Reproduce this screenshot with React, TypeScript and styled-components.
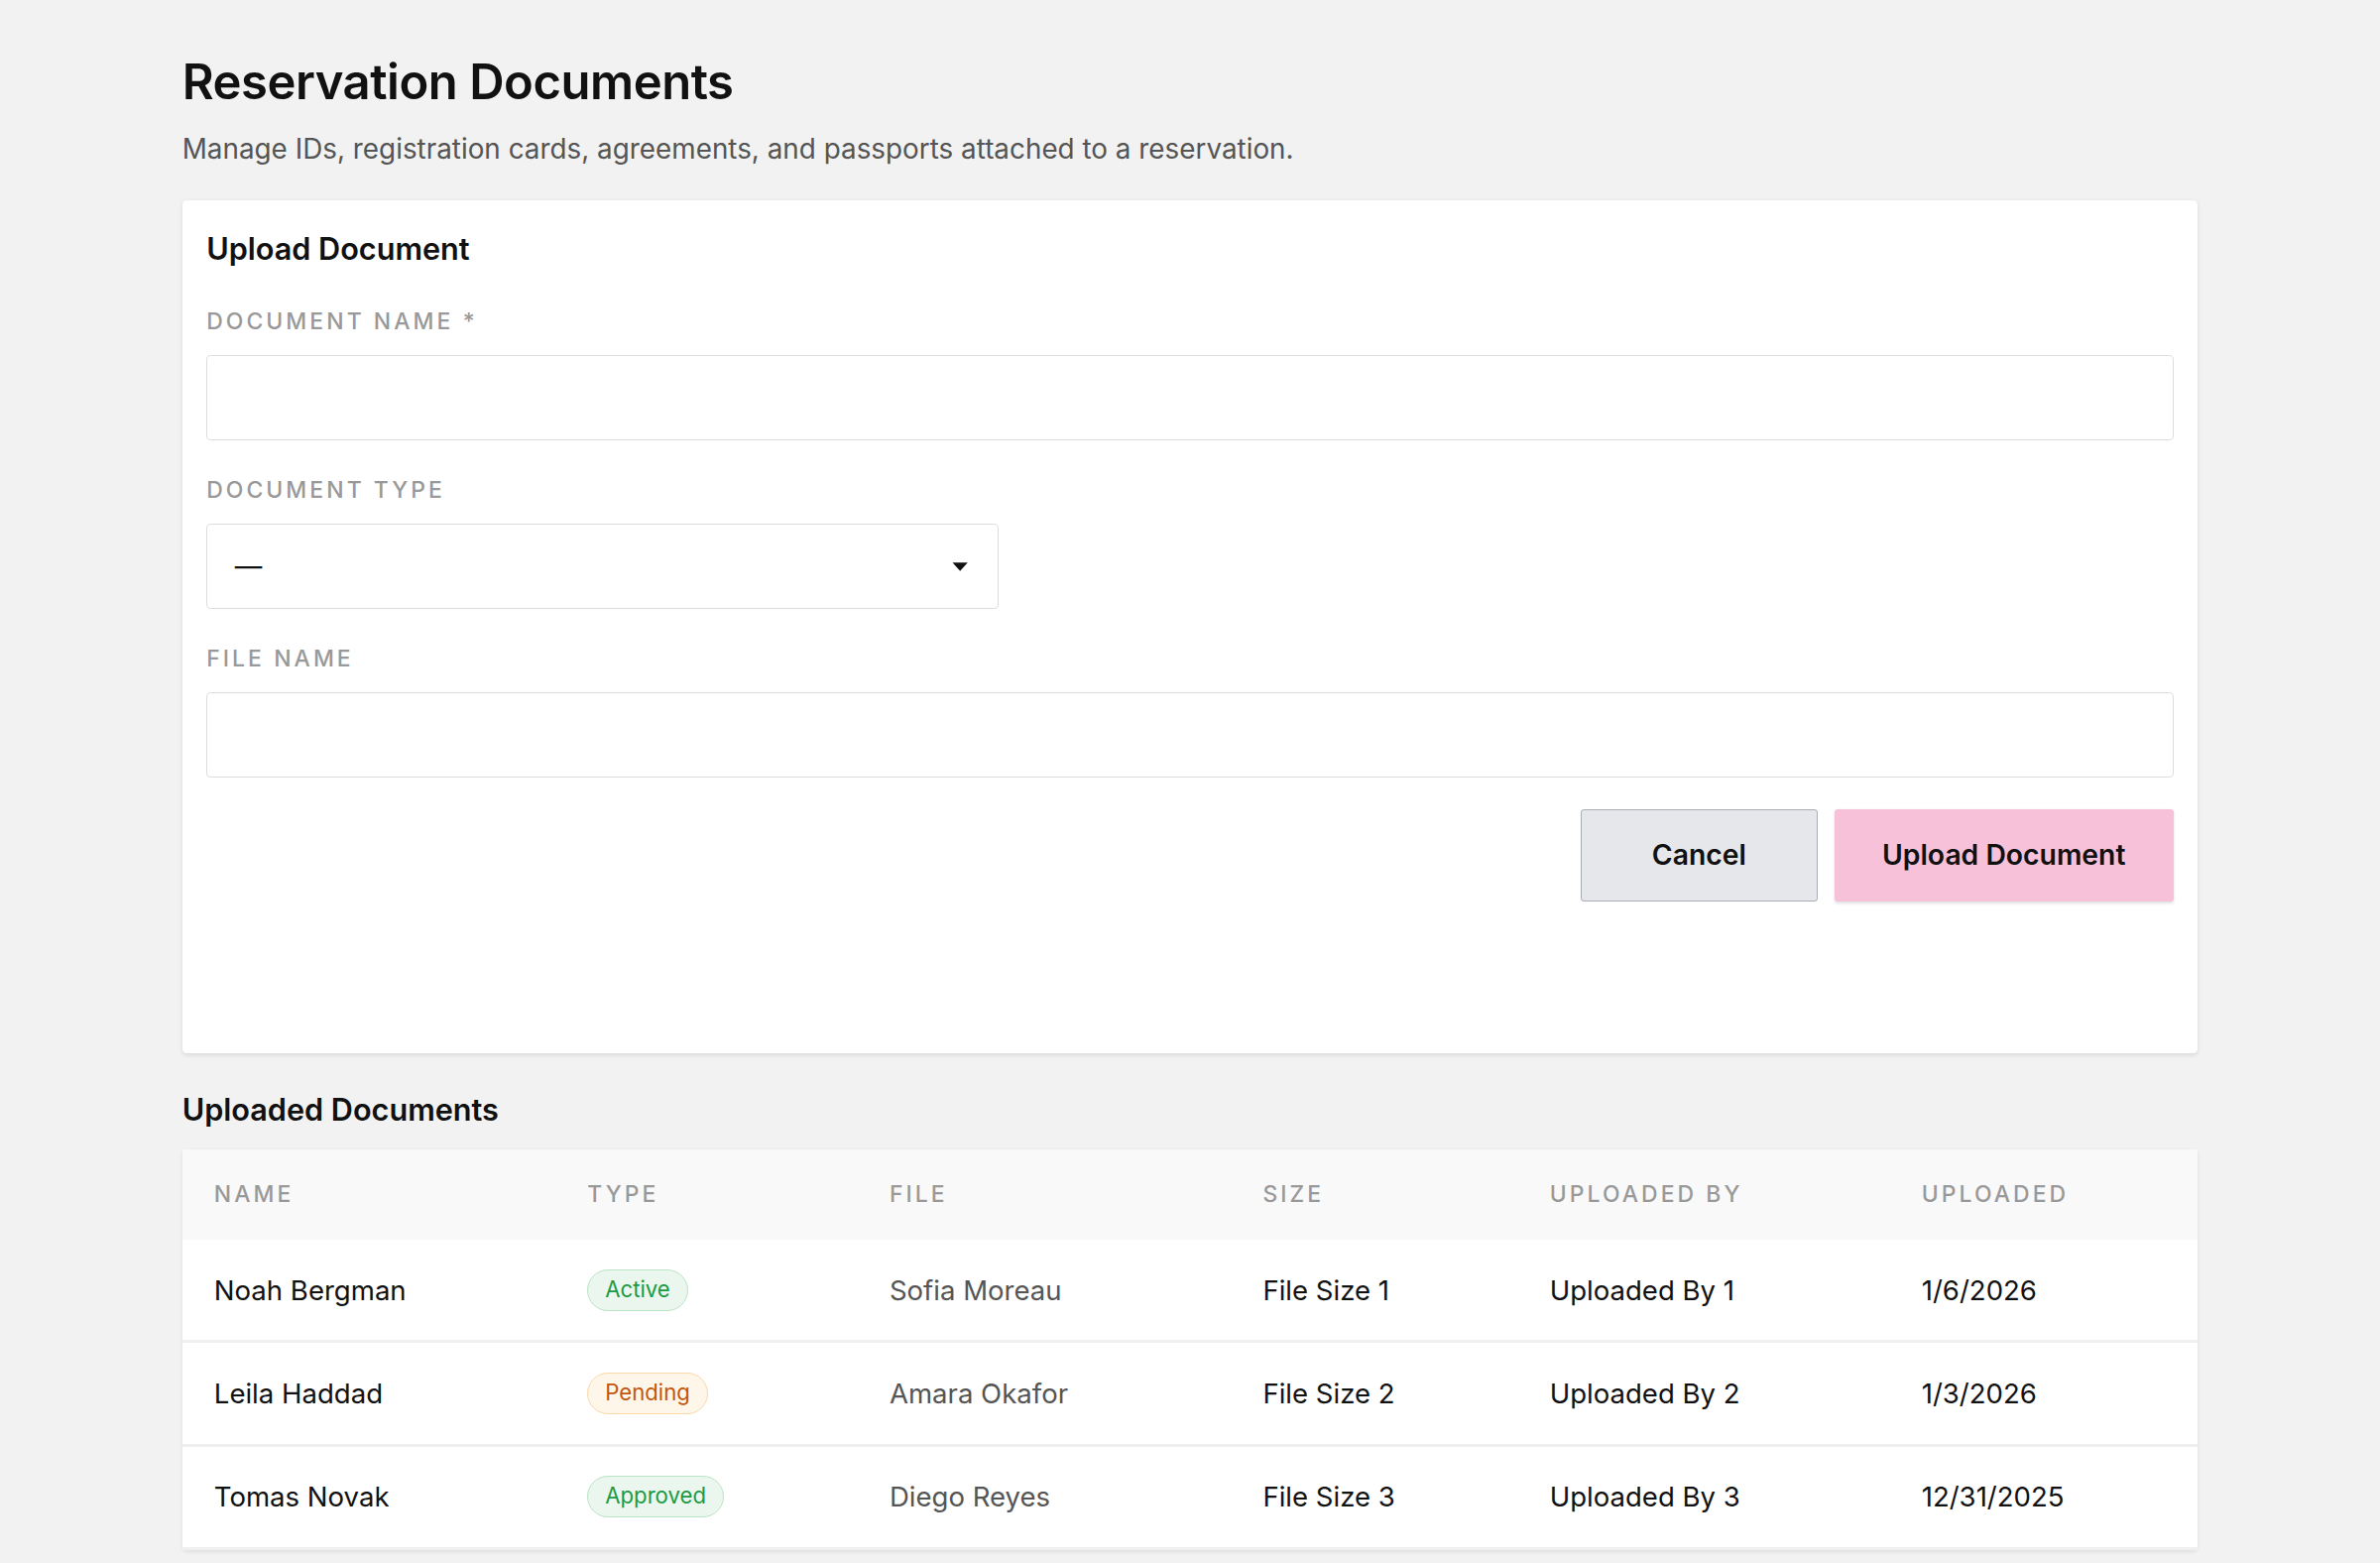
import React from 'react';
import styled, { createGlobalStyle } from 'styled-components';

const GlobalStyle = createGlobalStyle`
  html, body {
    margin: 0;
    background: #f2f2f2;
  }
  body {
    zoom: 1.5306;
    font-family: Inter, 'Noto Sans', sans-serif;
    color: #111;
  }
  * { box-sizing: border-box; }
`;

type Status = 'Active' | 'Pending' | 'Approved';

const rows: { name: string; type: Status; file: string; size: string; by: string; date: string }[] = [
  { name: 'Noah Bergman', type: 'Active', file: 'Sofia Moreau', size: 'File Size 1', by: 'Uploaded By 1', date: '1/6/2026' },
  { name: 'Leila Haddad', type: 'Pending', file: 'Amara Okafor', size: 'File Size 2', by: 'Uploaded By 2', date: '1/3/2026' },
  { name: 'Tomas Novak', type: 'Approved', file: 'Diego Reyes', size: 'File Size 3', by: 'Uploaded By 3', date: '12/31/2025' },
];

const App = () => {
  return (
    <React.Fragment>
      <GlobalStyle />
      <Page>
        <Title>Reservation Documents</Title>
        <Subtitle>Manage IDs, registration cards, agreements, and passports attached to a reservation.</Subtitle>

        <Card>
          <CardTitle>Upload Document</CardTitle>
          <Field>
            <Label>Document Name *</Label>
            <Input />
          </Field>
          <Field>
            <Label>Document Type</Label>
            <Select>
              <span>—</span>
              <svg width="12" height="8" viewBox="0 0 12 8">
                <path d="M1 1.5h10L6 7z" fill="#111" />
              </svg>
            </Select>
          </Field>
          <Field>
            <Label>File Name</Label>
            <Input />
          </Field>
          <Actions>
            <Button>Cancel</Button>
            <Button $primary>Upload Document</Button>
          </Actions>
        </Card>

        <SectionTitle>Uploaded Documents</SectionTitle>
        <Table>
          <HeadRow>
            <span>Name</span>
            <span>Type</span>
            <span>File</span>
            <span>Size</span>
            <span>Uploaded By</span>
            <span>Uploaded</span>
          </HeadRow>
          {rows.map((r) => (
            <Row key={r.name}>
              <span>{r.name}</span>
              <span>
                <Badge $status={r.type}>{r.type}</Badge>
              </span>
              <Muted>{r.file}</Muted>
              <span>{r.size}</span>
              <span>{r.by}</span>
              <span>{r.date}</span>
            </Row>
          ))}
        </Table>
      </Page>
    </React.Fragment>
  );
};

const Page = styled.div`
  padding: 34px 120px 40px;
`;

const Title = styled.h1`
  margin: 0;
  font-size: 32px;
  font-weight: 600;
  letter-spacing: -0.3px;
  line-height: 40px;
`;

const Subtitle = styled.p`
  margin: 12px 0 22px;
  font-size: 18.2px;
  color: #555;
  line-height: 24px;
`;

const Card = styled.section`
  background: #fff;
  border-radius: 3px;
  box-shadow: 0 1px 3px rgba(0, 0, 0, 0.1);
  padding: 18px 16px 100px;
`;

const CardTitle = styled.h2`
  margin: 0 0 24px;
  font-size: 20px;
  font-weight: 600;
  line-height: 28px;
`;

const Field = styled.div`
  margin-bottom: 23px;
`;

const Label = styled.div`
  font-size: 15px;
  font-weight: 500;
  letter-spacing: 2px;
  text-transform: uppercase;
  color: #999;
  line-height: 20px;
  margin-bottom: 12px;
`;

const Input = styled.div`
  height: 56px;
  border: 1px solid #dcdcdc;
  border-radius: 3px;
  background: #fff;
`;

const Select = styled(Input)`
  width: 522px;
  display: flex;
  align-items: center;
  justify-content: space-between;
  padding: 0 19px 0 18px;
  font-size: 18px;
`;

const Actions = styled.div`
  display: flex;
  justify-content: flex-end;
  gap: 11px;
  margin-top: -2px;
`;

const Button = styled.button<{ $primary?: boolean }>`
  height: 61px;
  padding: 0 31px;
  min-width: 156px;
  font-family: inherit;
  font-size: 18.5px;
  font-weight: 600;
  color: #111;
  border-radius: 2px;
  border: 1px solid ${(p) => (p.$primary ? '#f5c0d8' : '#a9adb3')};
  background: ${(p) => (p.$primary ? '#f6c1d9' : '#e5e7eb')};
  box-shadow: ${(p) => (p.$primary ? '0 1px 2px rgba(0,0,0,0.12)' : 'none')};
`;

const SectionTitle = styled.h2`
  margin: 24px 0 13px;
  font-size: 20px;
  font-weight: 600;
  line-height: 26px;
`;

const Table = styled.div`
  background: #fff;
  border-radius: 3px;
  box-shadow: 0 1px 3px rgba(0, 0, 0, 0.08);
`;

const grid = `
  display: grid;
  grid-template-columns: 246px 199px 246px 189px 245px 1fr;
  align-items: center;
  padding: 0 21px;
`;

const HeadRow = styled.div`
  ${grid}
  height: 60px;
  background: #f9f9f9;
  font-size: 15px;
  font-weight: 500;
  letter-spacing: 2px;
  text-transform: uppercase;
  color: #999;
`;

const Row = styled.div`
  ${grid}
  height: 68px;
  border-bottom: 2px solid #efefef;
  font-size: 18px;
`;

const Muted = styled.span`
  color: #555;
`;

const badgeColors: Record<Status, [string, string, string]> = {
  Active: ['#ebf7ee', '#b9e5c6', '#1a9a45'],
  Approved: ['#ebf7ee', '#b9e5c6', '#1a9a45'],
  Pending: ['#fff6ea', '#fbd9a8', '#c2560c'],
};

const Badge = styled.span<{ $status: Status }>`
  display: inline-block;
  font-size: 14.5px;
  line-height: 18px;
  padding: 4px 11px;
  border-radius: 14px;
  background: ${(p) => badgeColors[p.$status][0]};
  border: 1px solid ${(p) => badgeColors[p.$status][1]};
  color: ${(p) => badgeColors[p.$status][2]};
`;

export default App;
